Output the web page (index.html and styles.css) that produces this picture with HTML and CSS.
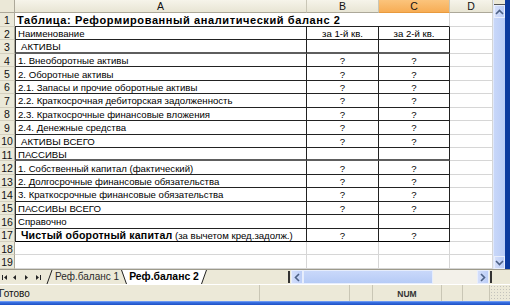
FILE: index.html
```html
<!DOCTYPE html>
<html lang="ru">
<head>
<meta charset="utf-8">
<title>Реф.баланс 2</title>
<link rel="stylesheet" href="styles.css">
</head>
<body>
<div class="app">
  <div class="main">
    <div class="sheet">
      <div class="corner"></div>
      <div class="ch">A</div><div class="ch">B</div><div class="ch sel">C</div><div class="ch">D</div>

      <div class="rh">1</div>
      <div class="cell title">Таблица: Реформированный аналитический баланс 2</div>
      <div class="cell"></div>

      <div class="rh">2</div>
      <div class="cell t ta">Наименование</div><div class="cell t num">за 1-й кв.</div><div class="cell t num">за 2-й кв.</div><div class="cell"></div>

      <div class="rh">3</div>
      <div class="cell t ta thick ind">АКТИВЫ</div><div class="cell t thick num"></div><div class="cell t thick num"></div><div class="cell"></div>

      <div class="rh">4</div>
      <div class="cell t ta">1. Внеоборотные активы</div><div class="cell t num">?</div><div class="cell t num">?</div><div class="cell"></div>

      <div class="rh">5</div>
      <div class="cell t ta">2. Оборотные активы</div><div class="cell t num">?</div><div class="cell t num">?</div><div class="cell"></div>

      <div class="rh">6</div>
      <div class="cell t ta">2.1. Запасы и прочие оборотные активы</div><div class="cell t num">?</div><div class="cell t num">?</div><div class="cell"></div>

      <div class="rh">7</div>
      <div class="cell t ta">2.2. Краткосрочная дебиторская задолженность</div><div class="cell t num">?</div><div class="cell t num">?</div><div class="cell"></div>

      <div class="rh">8</div>
      <div class="cell t ta">2.3. Краткосрочные финансовые вложения</div><div class="cell t num">?</div><div class="cell t num">?</div><div class="cell"></div>

      <div class="rh">9</div>
      <div class="cell t ta">2.4. Денежные средства</div><div class="cell t num">?</div><div class="cell t num">?</div><div class="cell"></div>

      <div class="rh">10</div>
      <div class="cell t ta ind">АКТИВЫ ВСЕГО</div><div class="cell t num">?</div><div class="cell t num">?</div><div class="cell"></div>

      <div class="rh">11</div>
      <div class="cell t ta thick">ПАССИВЫ</div><div class="cell t thick num"></div><div class="cell t thick num"></div><div class="cell"></div>

      <div class="rh">12</div>
      <div class="cell t ta">1. Собственный капитал (фактический)</div><div class="cell t num">?</div><div class="cell t num">?</div><div class="cell"></div>

      <div class="rh">13</div>
      <div class="cell t ta">2. Долгосрочные финансовые обязательства</div><div class="cell t num">?</div><div class="cell t num">?</div><div class="cell"></div>

      <div class="rh">14</div>
      <div class="cell t ta">3. Краткосрочные финансовые обязательства</div><div class="cell t num">?</div><div class="cell t num">?</div><div class="cell"></div>

      <div class="rh">15</div>
      <div class="cell t ta">ПАССИВЫ ВСЕГО</div><div class="cell t num">?</div><div class="cell t num">?</div><div class="cell"></div>

      <div class="rh">16</div>
      <div class="cell t ta">Справочно</div><div class="cell t num"></div><div class="cell t num"></div><div class="cell"></div>

      <div class="rh">17</div>
      <div class="cell t ta ind last"><b>Чистый оборотный капитал</b>&nbsp;(за вычетом кред.задолж.)</div><div class="cell t num last">?</div><div class="cell t num last">?</div><div class="cell"></div>

      <div class="rh">18</div>
      <div class="cell"></div><div class="cell"></div><div class="cell"></div><div class="cell"></div>

      <div class="rh">19</div>
      <div class="cell"></div><div class="cell"></div><div class="cell"></div><div class="cell"></div>
    </div>

    <div class="vscroll">
      <div class="vsplit"></div>
      <div class="sbtn"><svg width="9" height="6" viewBox="0 0 9 6"><path d="M1 5 L4.5 1.5 L8 5" fill="none" stroke="#4d6185" stroke-width="1.6"/></svg></div>
      <div class="vthumb"></div>
      <div class="sbtn"><svg width="9" height="6" viewBox="0 0 9 6"><path d="M1 1 L4.5 4.5 L8 1" fill="none" stroke="#4d6185" stroke-width="1.6"/></svg></div>
    </div>
    <div class="frame"></div>
  </div>

  <div class="tabbar">
    <div class="nav">
      <svg width="44" height="14" viewBox="0 0 44 14">
        <rect x="2" y="5" width="1" height="5" fill="#222"/>
        <path d="M7 5 L4 7.5 L7 10 Z" fill="#222"/>
        <path d="M16 5 L13 7.5 L16 10 Z" fill="#222"/>
        <path d="M25 5 L28 7.5 L25 10 Z" fill="#222"/>
        <path d="M36 5 L39 7.5 L36 10 Z" fill="#222"/>
        <rect x="40" y="5" width="1" height="5" fill="#222"/>
      </svg>
    </div>
    <div class="tabs">
      <svg class="slant" width="9" height="14" viewBox="0 0 9 14"><path d="M2 14 L7 0" stroke="#222" fill="none"/></svg>
      <div class="tab">Реф.баланс 1</div>
      <svg class="slant" width="8" height="14" viewBox="0 0 8 14"><path d="M2 0 L8 0 L8 14 L6.5 14 Z" fill="#fff"/><path d="M1.5 0 L6.5 14" stroke="#222" fill="none"/></svg>
      <div class="tab active">Реф.баланс 2</div>
      <svg class="slant" width="8" height="14" viewBox="0 0 8 14"><path d="M0 0 L0 14 L1.5 14 L6.5 0 Z" fill="#fff"/><path d="M1.5 14 L6.5 0" stroke="#222" fill="none"/></svg>
    </div>
    <div class="hscroll">
      <div class="hsplit"></div>
      <div class="sbtn h"><svg width="6" height="9" viewBox="0 0 6 9"><path d="M5 1 L1.5 4.5 L5 8" fill="none" stroke="#4d6185" stroke-width="1.6"/></svg></div>
      <div class="hthumb"></div>
      <div class="htrack"></div>
      <div class="sbtn h"><svg width="6" height="9" viewBox="0 0 6 9"><path d="M1 1 L4.5 4.5 L1 8" fill="none" stroke="#4d6185" stroke-width="1.6"/></svg></div>
      <div class="hsplit"></div>
    </div>
    <div class="tabrest"></div>
  </div>

  <div class="status">
    <div class="panel ready">Готово</div>
    <div class="panel p1"></div>
    <div class="panel p2"></div>
    <div class="panel p3">NUM</div>
    <div class="panel p4"></div>
    <div class="panel p5"></div>
    <div class="grip"></div>
  </div>
  <div class="taskbar"></div>
</div>
</body>
</html>
```

FILE: styles.css
```css
html, body {
  margin: 0;
  padding: 0;
  background: #ece9d8;
}

.app {
  width: 510px;
  height: 305px;
  overflow: hidden;
  font-family: "Liberation Sans", Arial, sans-serif;
  font-size: 10px;
  color: #000;
  display: flex;
  flex-direction: column;
}

.main {
  display: flex;
  height: 269px;
  flex: none;
}

.sheet {
  width: 493px;
  flex: none;
  display: grid;
  grid-template-columns: 15px 292px 72px 71px 43px;
  grid-template-rows: 13px 14px repeat(18, 13.44px);
  background: #fff;
}

.corner {
  background: #ebe8d7;
  border-right: 1px solid #aca899;
  border-bottom: 1px solid #aca899;
  box-sizing: border-box;
}

.ch {
  box-sizing: border-box;
  background: linear-gradient(#f6f4ea, #e8e5d4);
  border-right: 1px solid #c9c6b6;
  border-bottom: 1px solid #aca899;
  text-align: center;
  font-size: 10.5px;
  line-height: 12px;
  color: #111;
}

.ch.sel {
  background: linear-gradient(#fbc47c, #f7ad55);
  border-bottom-color: #e89a3d;
}

.rh {
  box-sizing: border-box;
  background: #ebe9d9;
  border-right: 1px solid #aca899;
  border-bottom: 1px solid #d4d0bf;
  font-size: 10.5px;
  display: flex;
  align-items: center;
  justify-content: center;
  padding-top: 1px;
  color: #111;
}

.cell {
  box-sizing: border-box;
  border-right: 1px solid #d6d6d6;
  border-bottom: 1px solid #d6d6d6;
  padding: 1px 2px 0;
  white-space: nowrap;
  display: flex;
  align-items: center;
  font-size: 9.6px;
  overflow: visible;
  min-width: 0;
}

.cell.title {
  grid-column: span 3;
  font-weight: bold;
  font-size: 11px;
  letter-spacing: 0.6px;
  border-bottom-color: #222;
  border-right: 1px solid #d6d6d6;
}

.cell.t {
  border-right-color: #222;
  border-bottom-color: #222;
}

.cell.ta {
  border-left: 1px solid #333;
  padding-left: 2px;
}

.cell.ind {
  padding-left: 5px;
}

.cell.thick {
  border-bottom: 2px solid #5e5e5e;
}

.cell.last {
  border-bottom: 1px solid #000;
}

.cell.num {
  justify-content: center;
}

.cell b {
  font-weight: bold;
  font-size: 10.6px;
  letter-spacing: 0.15px;
}

.vscroll {
  width: 12px;
  flex: none;
  display: flex;
  flex-direction: column;
  background: #c4d4f8;
  border-left: 1px solid #dfe8fc;
  box-sizing: border-box;
}

.vsplit {
  height: 4px;
  background: #ece9d8;
  border-bottom: 1px solid #555;
}

.sbtn {
  height: 13px;
  flex: none;
  display: flex;
  align-items: center;
  justify-content: center;
  background: linear-gradient(90deg, #d3defb, #bccef7);
  border: 1px solid #e8eefc;
  box-sizing: border-box;
}

.vthumb {
  flex: 1;
  background: linear-gradient(90deg, #c8d7f9, #b9ccf6);
}

.frame {
  flex: 1;
  background: #0b3a9e;
}

.tabbar {
  height: 15px;
  flex: none;
  display: flex;
  background: #ece9d8;
  border-top: 1px solid #9d9a8a;
  box-sizing: border-box;
}

.nav {
  width: 45px;
  flex: none;
  display: flex;
  align-items: center;
}

.tabs {
  display: flex;
  align-items: stretch;
  width: 242px;
  flex: none;
}

.slant {
  flex: none;
  display: block;
}

.tab {
  font-size: 10px;
  line-height: 14px;
  color: #2a2a2a;
  padding: 0 1px;
  white-space: nowrap;
}

.tab.active {
  background: #fff;
  font-weight: bold;
  color: #000;
  font-size: 10.4px;
}

.hscroll {
  display: flex;
  width: 206px;
  flex: none;
  align-items: stretch;
}

.hsplit {
  width: 2px;
  background: #333;
  margin: 1px 1px;
}

.sbtn.h {
  width: 12px;
  height: auto;
}

.hthumb {
  width: 130px;
  background: linear-gradient(#c9d8fa, #b6cbf6);
  border: 1px solid #e6edfc;
  box-sizing: border-box;
}

.htrack {
  flex: 1;
  background: #f3f1ea;
}

.tabrest {
  flex: 1;
}

.status {
  height: 17px;
  flex: none;
  display: flex;
  background: #ece9d8;
  border-top: 1px solid #fff;
  box-sizing: border-box;
}

.panel {
  box-sizing: border-box;
  border-right: 1px solid #c9c6b5;
  font-size: 10px;
  line-height: 18px;
  color: #111;
}

.ready {
  width: 260px;
  text-indent: -1px;
}

.p1 { width: 90px; }
.p2 { width: 23px; }
.p3 {
  width: 69px;
  font-size: 8.5px;
  font-weight: bold;
  text-align: center;
  color: #333;
}
.p4 { width: 21px; }
.p5 { width: 27px; }

.grip {
  flex: 1;
  background: radial-gradient(circle, #aaa 0.8px, transparent 1px) 0 0 / 3px 3px;
  opacity: 0.6;
}

.taskbar {
  flex: 1;
  background: linear-gradient(#3d77e8, #1f4fc2);
  border-top: 1px solid #6c97f2;
}
```
